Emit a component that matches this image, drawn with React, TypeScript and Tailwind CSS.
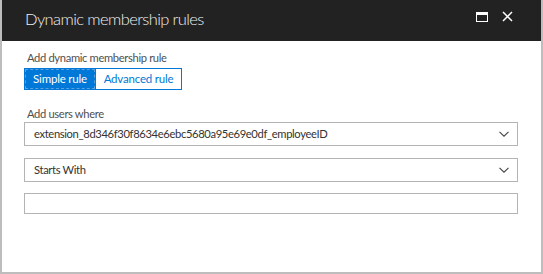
const font = { fontFamily: 'Lato, "Open Sans", sans-serif' };

const Chevron = () => (
  <svg width="10" height="6" viewBox="0 0 10 6" className="shrink-0">
    <path d="M0.5 0.8 L5 5.2 L9.5 0.8" fill="none" stroke="#444" strokeWidth="1.1" />
  </svg>
);

const SelectBox = ({ value }: { value: string }) => (
  <div className="flex h-[24px] items-center justify-between border border-[#b4b4b4] bg-white pl-[9px] pr-[8px]">
    <span className="text-[11.2px] tracking-[-0.35px] text-[#333]">{value}</span>
    <Chevron />
  </div>
);

export default function App() {
  return (
    <div className="w-[543px] h-[274px] bg-white border-x-2 border-b-2 border-[#bdbdbd] flex flex-col" style={font}>
      <div className="h-[41px] bg-[#222222] flex items-start justify-between pl-[23px] pr-[28px] shrink-0">
        <h1 className="text-[16.5px] font-light tracking-[-0.6px] text-[#f0f0f0] mt-[7px]">Dynamic membership rules</h1>
        <div className="flex items-center gap-[14px] mt-[11px]">
          <div className="w-[12px] h-[10px] border-[1.5px] border-t-[3px] border-white" />
          <svg width="11" height="11" viewBox="0 0 11 11">
            <path d="M1 1 L10 10 M10 1 L1 10" stroke="white" strokeWidth="1.5" />
          </svg>
        </div>
      </div>
      <div className="pl-[22px] pr-[23px] pt-[9px]">
        <div className="text-[11.2px] tracking-[-0.35px] text-[#505050] leading-[16px] pl-[3px]">Add dynamic membership rule</div>
        <div className="flex mt-[2px] text-[11.5px] tracking-[-0.2px]">
          <button className="h-[22px] w-[72px] bg-[#0078d7] text-white outline-1 outline-dashed outline-offset-[-2px] outline-[#5aa0e0] border border-[#0078d7]">
            Simple rule
          </button>
          <button className="h-[22px] w-[86px] bg-white text-[#0078d7] border border-[#0078d7] border-l-0">
            Advanced rule
          </button>
        </div>
        <div className="text-[11.2px] tracking-[-0.35px] text-[#505050] leading-[16px] mt-[16px] pl-[3px]">Add users where</div>
        <SelectBox value="extension_8d346f30f8634e6ebc5680a95e69e0df_employeeID" />
        <div className="mt-[12px]">
          <SelectBox value="Starts With" />
        </div>
        <div className="mt-[11px] h-[21px] border border-[#b4b4b4] bg-white" />
      </div>
    </div>
  );
}
